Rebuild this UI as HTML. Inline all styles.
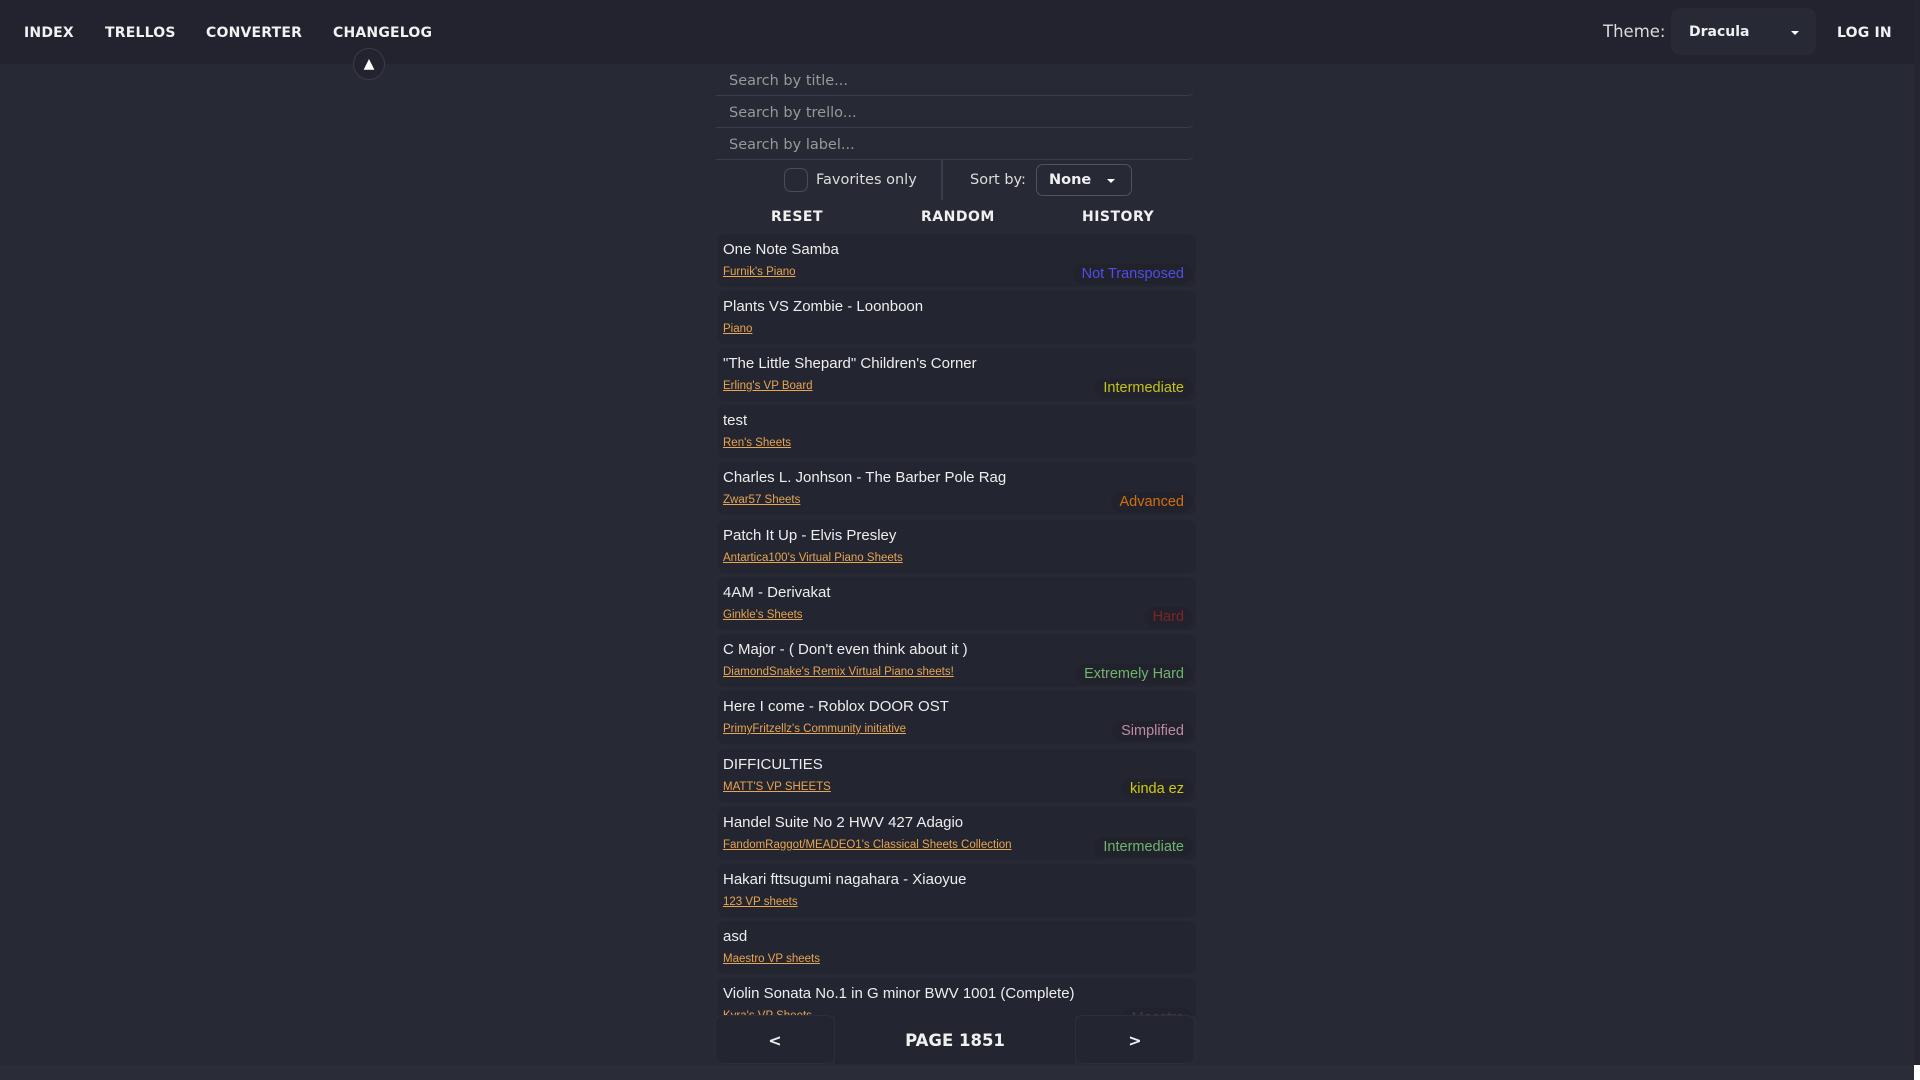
<!DOCTYPE html>
<html><head><meta charset="utf-8"><style>
*{margin:0;padding:0;box-sizing:border-box}
body{width:1920px;height:1080px;background:#272935;overflow:hidden;position:relative;font-family:"DejaVu Sans",sans-serif;color:#f0f0f0}
.hdr{position:absolute;left:0;top:0;width:1914px;height:64px;background:#22232e}
.nav{position:absolute;top:25px;font-weight:bold;font-size:14px;color:#f2f2f2;letter-spacing:.2px}
.up{position:absolute;left:353px;top:48px;width:32px;height:32px;border-radius:50%;border:1px solid #3a3c4a;background:#22232e;color:#fff;font-size:14px;text-align:center;line-height:30px}
.theme{position:absolute;left:1603px;top:22px;font-size:16.5px;color:#ddd}
.tsel{position:absolute;left:1671px;top:8px;width:145px;height:47px;background:#272935;border-radius:9px}
.tsel b{position:absolute;left:18px;top:16px;font-size:14px}
.caret{position:absolute;width:0;height:0;border-left:4px solid transparent;border-right:4px solid transparent;border-top:4px solid #fff}
.inp{position:absolute;left:716px;width:478px;height:32px;border-bottom:1.5px solid #3b3d4c;font-size:14.5px;color:#999;padding:9px 13px 0;border-radius:0 0 6px 0}
.cb{position:absolute;left:784px;top:168px;width:24px;height:24px;border:1.5px solid #4a4c5a;border-radius:7px}
.btn{position:absolute;top:209px;font-weight:bold;font-size:14px;letter-spacing:.5px}
.sc{position:absolute;left:716px;top:231px;width:482px;height:785px;overflow:hidden}
.card{position:absolute;left:2px;width:478px;height:53px;background:#232530;border-radius:7px}
.card .t{position:absolute;left:5px;top:7px;font-family:"Liberation Sans",sans-serif;font-size:15px;color:#eee;white-space:nowrap}
.card a{position:absolute;left:5px;top:32px;font-family:"Liberation Sans",sans-serif;font-size:11.5px;color:#e8a552;text-decoration:underline}
.card .l{position:absolute;right:3px;top:30px;height:20px;padding:0 9px;border-radius:10px;background:#21222c;font-family:"Liberation Sans",sans-serif;font-size:14.5px;line-height:20px}
.pg{position:absolute;top:1015px;height:49px;background:#232530;border:1px solid #2c2e3a;border-radius:8px;font-weight:bold;font-size:16px;text-align:center;line-height:49px}
</style></head><body>
<div class="hdr"></div>
<div class="nav" style="left:24px">INDEX</div>
<div class="nav" style="left:105px">TRELLOS</div>
<div class="nav" style="left:206px">CONVERTER</div>
<div class="nav" style="left:333px">CHANGELOG</div>
<div class="up">▲</div>
<div class="theme">Theme:</div>
<div class="tsel"><b>Dracula</b><div class="caret" style="left:120px;top:23px"></div></div>
<div class="nav" style="left:1837px">LOG IN</div>

<div class="inp" style="top:64px">Search by title...</div>
<div class="inp" style="top:96px">Search by trello...</div>
<div class="inp" style="top:128px">Search by label...</div>
<div class="cb"></div>
<div style="position:absolute;left:816px;top:172px;font-size:14.5px;color:#ddd">Favorites only</div>
<div style="position:absolute;left:941px;top:160px;width:2px;height:40px;background:#3b3d4c"></div>
<div style="position:absolute;left:970px;top:172px;font-size:14.5px;color:#ddd">Sort by:</div>
<div style="position:absolute;left:1036px;top:164px;width:96px;height:32px;border:1px solid #50525e;border-radius:7px"><b style="position:absolute;left:12px;top:7px;font-size:14.5px">None</b><div class="caret" style="left:70px;top:14px"></div></div>
<div class="btn" style="left:771px">RESET</div>
<div class="btn" style="left:921px">RANDOM</div>
<div class="btn" style="left:1082px">HISTORY</div>

<div class="sc">
<div class="card" style="top:3px"><div class="t">One Note Samba</div><a>Furnik's Piano</a><div class="l" style="color:#4f4ee6">Not Transposed</div></div>
<div class="card" style="top:60px"><div class="t">Plants VS Zombie - Loonboon</div><a>Piano</a></div>
<div class="card" style="top:117px"><div class="t">"The Little Shepard" Children's Corner</div><a>Erling's VP Board</a><div class="l" style="color:#c2c21a">Intermediate</div></div>
<div class="card" style="top:174px"><div class="t">test</div><a>Ren's Sheets</a></div>
<div class="card" style="top:231px"><div class="t">Charles L. Jonhson - The Barber Pole Rag</div><a>Zwar57 Sheets</a><div class="l" style="color:#d2700e">Advanced</div></div>
<div class="card" style="top:289px"><div class="t">Patch It Up - Elvis Presley</div><a>Antartica100's Virtual Piano Sheets</a></div>
<div class="card" style="top:346px"><div class="t">4AM - Derivakat</div><a>Ginkle's Sheets</a><div class="l" style="color:#7e2424">Hard</div></div>
<div class="card" style="top:403px"><div class="t">C Major - ( Don't even think about it )</div><a>DiamondSnake's Remix Virtual Piano sheets!</a><div class="l" style="color:#6fb46f">Extremely Hard</div></div>
<div class="card" style="top:460px"><div class="t">Here I come - Roblox DOOR OST</div><a>PrimyFritzellz's Community initiative</a><div class="l" style="color:#c08aa2">Simplified</div></div>
<div class="card" style="top:518px"><div class="t">DIFFICULTIES</div><a>MATT'S VP SHEETS</a><div class="l" style="color:#cccc10">kinda ez</div></div>
<div class="card" style="top:576px"><div class="t">Handel Suite No 2 HWV 427 Adagio</div><a>FandomRaggot/MEADEO1's Classical Sheets Collection</a><div class="l" style="color:#6fb46f">Intermediate</div></div>
<div class="card" style="top:633px"><div class="t">Hakari fttsugumi nagahara - Xiaoyue</div><a>123 VP sheets</a></div>
<div class="card" style="top:690px"><div class="t">asd</div><a>Maestro VP sheets</a></div>
<div class="card" style="top:747px"><div class="t">Violin Sonata No.1 in G minor BWV 1001 (Complete)</div><a>Kyra's VP Sheets</a><div class="l" style="color:#3a3c48">Maestro</div></div>
</div>
<div class="pg" style="left:715px;width:120px">&lt;</div>
<div style="position:absolute;left:835px;top:1015px;width:240px;height:49px;background:#232530;font-weight:bold;font-size:16.5px;text-align:center;line-height:51px">PAGE 1851</div>
<div class="pg" style="left:1075px;width:120px">&gt;</div>
<div style="position:absolute;left:0;top:1065px;width:1914px;height:15px;background:#2a2c38"></div>
<div style="position:absolute;left:1914px;top:0;width:6px;height:1065px;background:#24252f"></div>
<div style="position:absolute;left:1914px;top:1065px;width:6px;height:15px;background:#fff"></div>
</body></html>
